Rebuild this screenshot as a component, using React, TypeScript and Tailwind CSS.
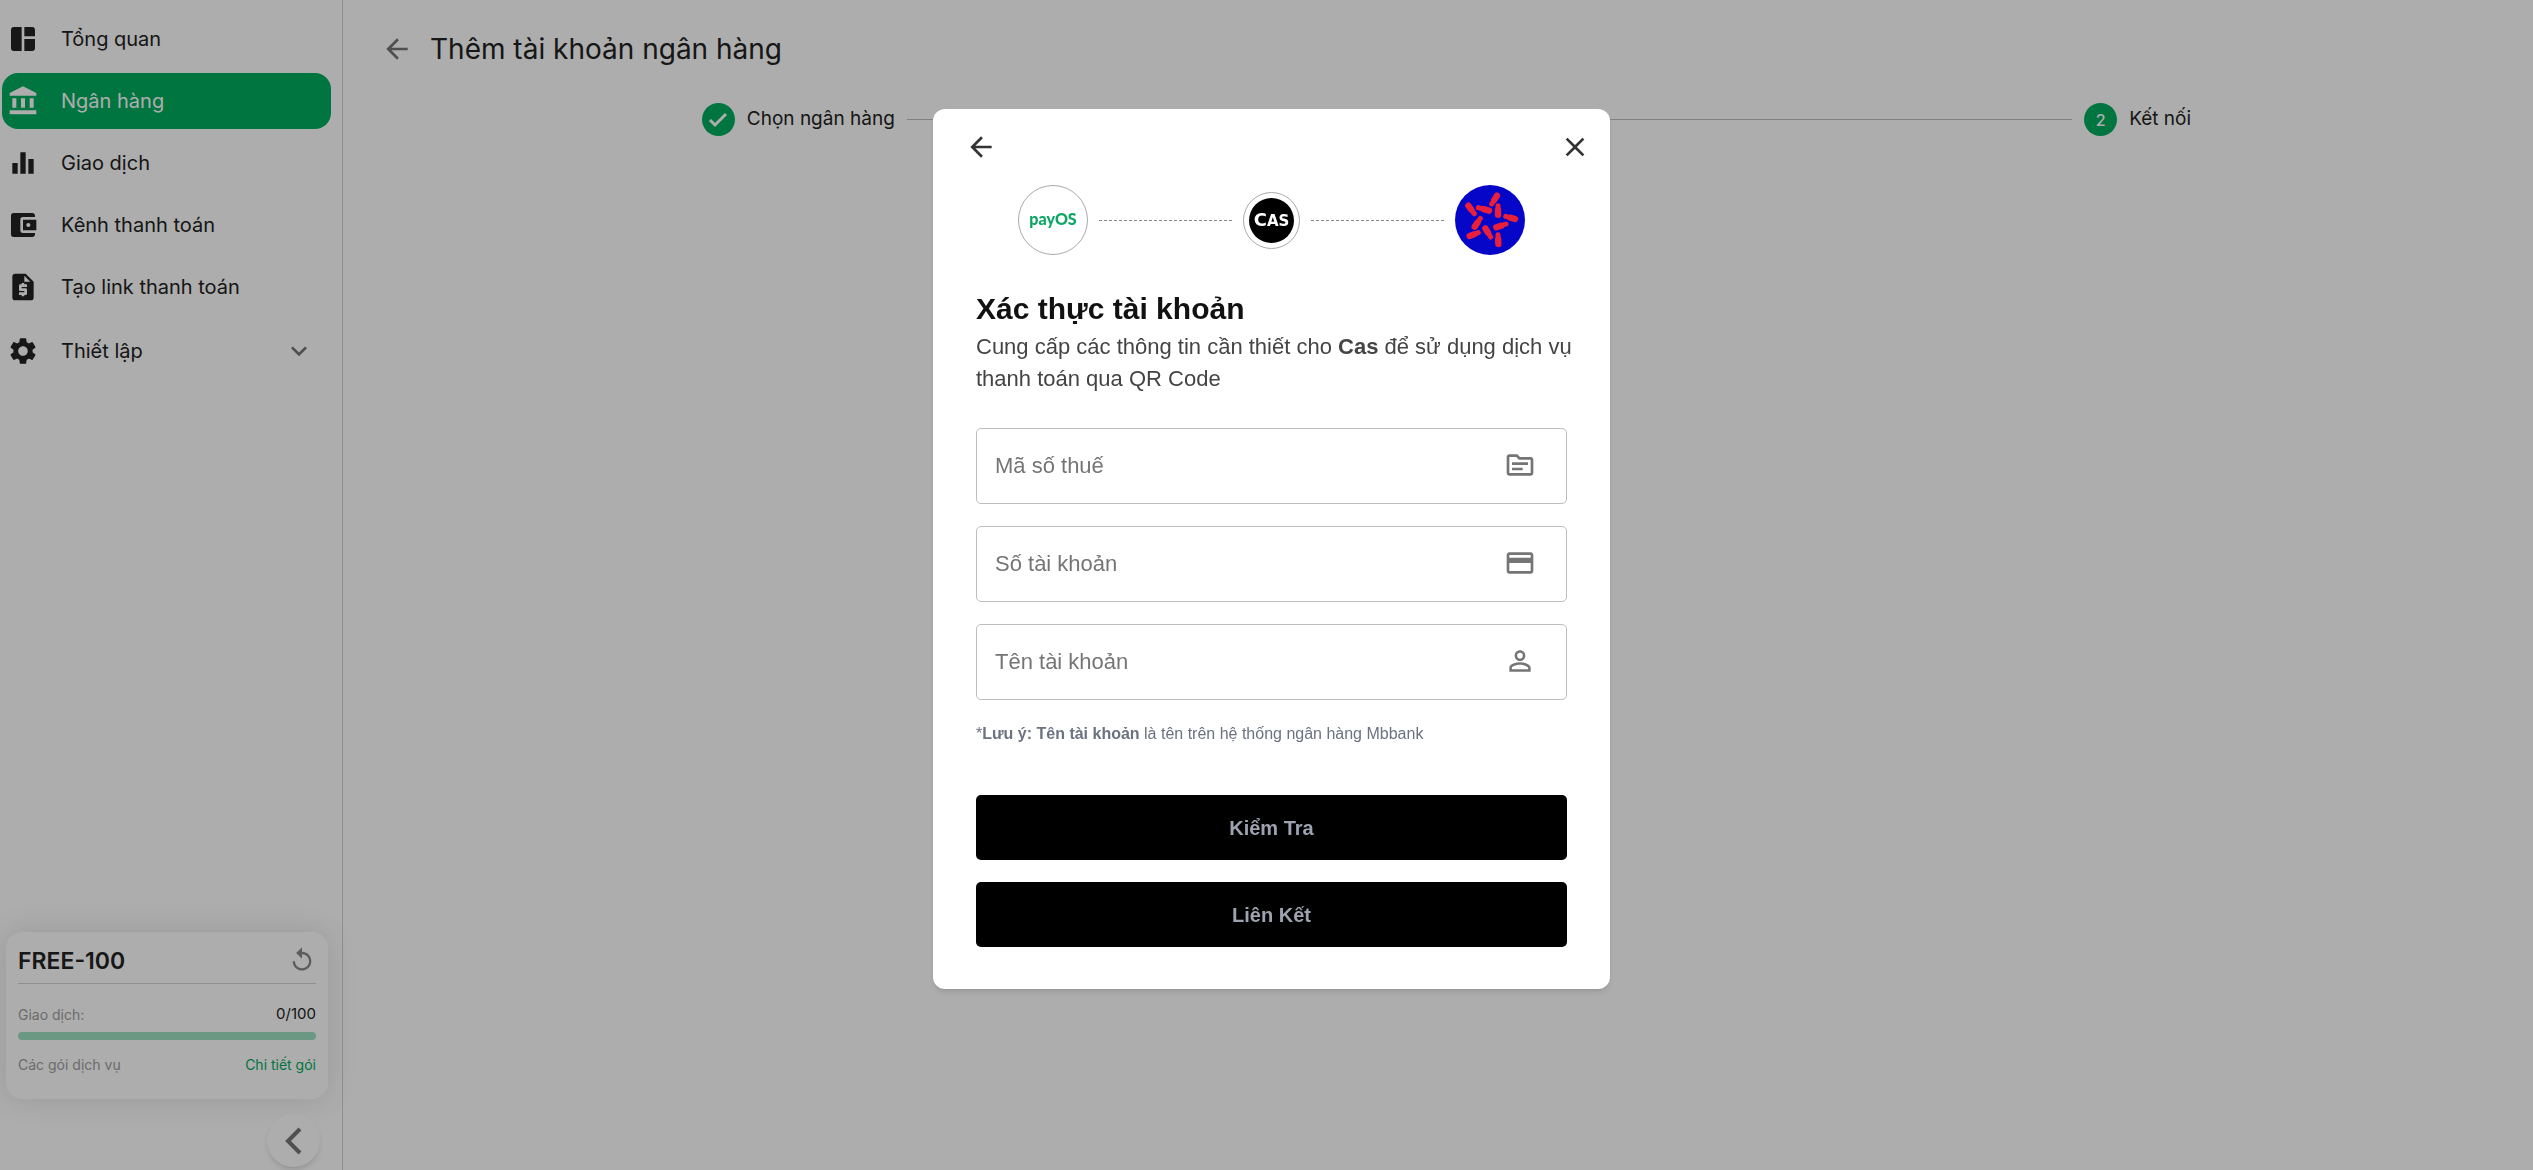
import React from "react";
import type { IconType } from "react-icons";
import {
  MdAccountBalance,
  MdArrowBack,
  MdClose,
  MdCreditCard,
  MdEqualizer,
  MdKeyboardArrowDown,
  MdOutlinePersonOutline,
  MdOutlineSource,
  MdReplay,
  MdRequestQuote,
  MdSettings,
  MdSpaceDashboard,
  MdAccountBalanceWallet,
} from "react-icons/md";

interface MenuItem {
  label: string;
  icon: IconType;
  active?: boolean;
}

const menuItems: MenuItem[] = [
  { label: "Tổng quan", icon: MdSpaceDashboard },
  { label: "Ngân hàng", icon: MdAccountBalance, active: true },
  { label: "Giao dịch", icon: MdEqualizer },
  { label: "Kênh thanh toán", icon: MdAccountBalanceWallet },
  { label: "Tạo link thanh toán", icon: MdRequestQuote },
];

const fields = [
  { id: "taxCode", label: "Mã số thuế", icon: MdOutlineSource },
  { id: "accountNumber", label: "Số tài khoản", icon: MdCreditCard },
  { id: "accountName", label: "Tên tài khoản", icon: MdOutlinePersonOutline },
];

// each petal goes from its wide end to its narrow end
const petals = [
  [126, 32, 110, 57],
  [102, 77, 70, 68],
  [129, 89, 129, 62],
  [180, 102, 152, 94],
  [40, 62, 58, 86],
  [59, 125, 76, 100],
  [124, 127, 153, 117],
  [91, 130, 107, 156],
  [44, 153, 70, 143],
  [130, 177, 129, 149],
];

function Sidebar() {
  return (
    <aside className="flex w-[343px] shrink-0 flex-col border-r border-[#d4d4d4]">
      <nav className="flex flex-col gap-1.5 pt-[11px] pr-[11px] pl-0.5">
        {menuItems.map(({ label, icon: Icon, active }) => (
          <a
            key={label}
            href="#"
            className={
              active
                ? "flex h-14 items-center gap-[22px] rounded-2xl bg-[#00ad5f] pl-[5px] text-white"
                : "flex h-14 items-center gap-[22px] rounded-2xl pl-[5px] text-[#222]"
            }
          >
            <Icon className="size-8" />
            <span className="text-[20px]">{label}</span>
          </a>
        ))}
        <button className="mt-0.5 flex h-14 items-center gap-[22px] pr-4 pl-[5px] text-[#222]">
          <MdSettings className="size-8" />
          <span className="text-[20px]">Thiết lập</span>
          <MdKeyboardArrowDown className="ml-auto size-8 text-[#757575]" />
        </button>
      </nav>

      <div className="mt-auto mr-3.5 mb-[15px] ml-1.5 h-[167px] rounded-2xl bg-white px-3 pt-2 shadow-[0_0_30px_rgba(0,0,0,0.12)]">
        <div className="flex h-11 items-center justify-between border-b border-[#d4d4d4]">
          <h2 className="text-[23px] font-semibold text-[#222]">FREE-100</h2>
          <button aria-label="Làm mới" className="pb-1 text-[#8a8a8a]">
            <MdReplay className="size-7" />
          </button>
        </div>
        <div className="mt-[18px] flex h-6 items-center justify-between text-[14px]">
          <span className="text-[#9e9e9e]">Giao dịch:</span>
          <span className="text-[15px] text-[#222]">0/100</span>
        </div>
        <div className="mt-1.5 h-2 rounded-full bg-[#9de0c1]" />
        <div className="mt-3 flex h-6 items-center justify-between text-[14px]">
          <span className="text-[#9e9e9e]">Các gói dịch vụ</span>
          <a href="#" className="text-[#00ad5f]">
            Chi tiết gói
          </a>
        </div>
      </div>

      <button
        aria-label="Thu gọn"
        className="mr-[22px] mb-[3px] flex size-[53px] items-center justify-center self-end rounded-full bg-white text-[#757575] shadow-md"
      >
        <svg
          viewBox="0 0 32 32"
          className="size-8"
          fill="none"
          stroke="currentColor"
          strokeWidth="4"
        >
          <path d="M22 4L10 16l12 12" />
        </svg>
      </button>
    </aside>
  );
}

function Stepper() {
  return (
    <ol className="mr-[342px] ml-auto flex w-[68%] items-center text-[19px] text-[#222]">
      <li className="flex items-center gap-3">
        <span className="flex size-[33px] items-center justify-center rounded-full bg-[#00ad5f] text-white">
          <svg
            viewBox="0 0 24 24"
            className="size-6"
            fill="none"
            stroke="currentColor"
            strokeWidth="3"
          >
            <path d="M4 12l5 5L20 6" />
          </svg>
        </span>
        Chọn ngân hàng
      </li>
      <li className="mx-3 h-px flex-1 bg-[#bdbdbd]" />
      <li className="flex items-center gap-3">
        <span className="flex size-[33px] items-center justify-center rounded-full bg-[#00ad5f] text-[16px] font-medium text-white">
          2
        </span>
        Kết nối
      </li>
    </ol>
  );
}

function BankLogo() {
  return (
    <svg viewBox="0 0 210 210" className="size-[70px]">
      <circle cx="105" cy="105" r="105" fill="#0606c8" />
      {petals.map(([x1, y1, x2, y2], i) => (
        <g key={i} stroke="#e8203c" strokeLinecap="round">
          <line x1={x1} y1={y1} x2={x2} y2={y2} strokeWidth="15" />
          <line
            x1={x1}
            y1={y1}
            x2={(x1 + x2) / 2}
            y2={(y1 + y2) / 2}
            strokeWidth="19"
          />
        </g>
      ))}
    </svg>
  );
}

function LinkModal() {
  return (
    <div className="fixed inset-0 flex items-start justify-center bg-black/32 pt-[109px] pl-2.5">
      <div
        role="dialog"
        aria-labelledby="modal-title"
        className="w-[677px] rounded-xl bg-white pb-[42px] font-['Liberation_Sans',Arial,sans-serif] shadow-md"
      >
        <div className="flex justify-between pt-[22px] pr-[19px] pl-8 text-[#333]">
          <button aria-label="Quay lại">
            <MdArrowBack className="size-8" />
          </button>
          <button aria-label="Đóng">
            <MdClose className="size-8" />
          </button>
        </div>

        <div className="mx-[85px] mt-[22px] flex items-center gap-[11px]">
          <div className="flex size-[70px] items-center justify-center rounded-full border border-[#aaa] pb-0.5 font-['Lato',sans-serif] text-[16px] font-black text-[#0ca665]">
            payOS
          </div>
          <div className="flex-1 border-t border-dashed border-[#888]" />
          <div className="flex size-[57px] items-center justify-center rounded-full border border-[#aaa]">
            <div className="flex size-[45px] items-center justify-center rounded-full bg-black text-white">
              <p className="font-['DejaVu_Sans',sans-serif] text-[18px] leading-5 font-bold">
                C<span className="text-[15px]">AS</span>
              </p>
            </div>
          </div>
          <div className="flex-1 border-t border-dashed border-[#888]" />
          <BankLogo />
        </div>

        <div className="px-[43px] pt-9">
          <h1
            id="modal-title"
            className="pb-1 text-[30px] leading-9 font-bold text-[#111]"
          >
            Xác thực tài khoản
          </h1>
          <p className="-mr-2 text-[22px] leading-8 text-[#444]">
            Cung cấp các thông tin cần thiết cho <b>Cas</b> để sử dụng dịch vụ
            thanh toán qua QR Code
          </p>

          <form className="mt-[33px] flex flex-col gap-[22px]">
            {fields.map(({ id, label, icon: Icon }) => (
              <label
                key={id}
                htmlFor={id}
                className="flex h-[76px] items-center rounded-[5px] border border-[#bdbdbd] pr-[30px] pb-0.5 pl-[18px] text-[#757575]"
              >
                <input
                  id={id}
                  aria-label={label}
                  placeholder={label}
                  className="min-w-0 flex-1 text-[22px] outline-none placeholder:text-[#757575]"
                />
                <Icon className="size-8" />
              </label>
            ))}
          </form>

          <p className="mt-[22px] text-[16px] leading-6 text-[#6b7280]">
            *<b>Lưu ý: Tên tài khoản</b> là tên trên hệ thống ngân hàng Mbbank
          </p>

          <div className="mt-[49px] flex flex-col gap-[22px]">
            <button className="h-[65px] rounded-[5px] bg-black text-[20px] font-bold text-[#9ca3af]">
              Kiểm Tra
            </button>
            <button className="h-[65px] rounded-[5px] bg-black text-[20px] font-bold text-[#9ca3af]">
              Liên Kết
            </button>
          </div>
        </div>
      </div>
    </div>
  );
}

export default function App() {
  return (
    <div className="flex min-h-screen bg-white font-['Inter',sans-serif]">
      <Sidebar />
      <main className="flex-1">
        <header className="flex items-center gap-[17px] pt-[26px] pb-[31px] pl-[38px]">
          <button aria-label="Trở về" className="text-[#757575]">
            <MdArrowBack className="size-8" />
          </button>
          <h1 className="text-[28px] leading-[46px] text-[#222]">
            Thêm tài khoản ngân hàng
          </h1>
        </header>
        <Stepper />
      </main>
      <LinkModal />
    </div>
  );
}
